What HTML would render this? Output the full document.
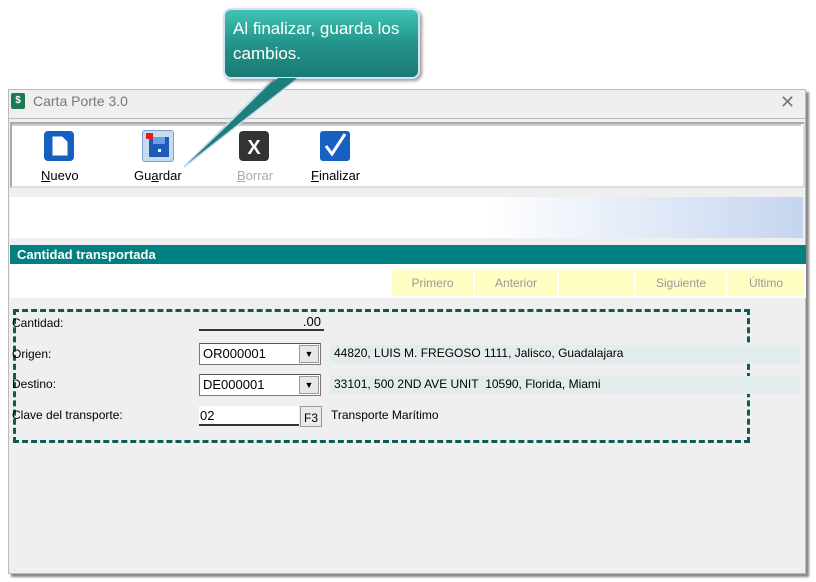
<!DOCTYPE html>
<html><head><meta charset="utf-8"><style>
*{margin:0;padding:0;box-sizing:border-box}
body{width:816px;height:582px;background:#fff;position:relative;font-family:"Liberation Sans",Arial,sans-serif;overflow:hidden}
.abs{position:absolute}
.win{left:8px;top:89px;width:798px;height:485px;background:#efefef;border:1px solid #bbb;box-shadow:3px 3px 2px #888}
.t{font-size:12px;color:#000}
.nav{top:270px;height:26px;background:#ffffc4;color:#999;font-size:12px;text-align:center;line-height:26px}
.lbl{font-size:12px;left:12px}
.combo{background:#fff;border:1px solid #7a7a7a;border-top-color:#555;height:22px;font-size:13px;line-height:20px;padding-left:3px}
.dd{position:absolute;right:1px;top:1px;width:20px;height:18px;background:#e8e8e8;border:1px solid #999;font-size:9px;text-align:center;line-height:17px}
.desc{background:#e3ecec;height:18px;font-size:12px;line-height:17px;padding-left:4px}
</style></head><body>
<div class="abs win"></div>
<div class="abs" style="left:11px;top:93px;width:14px;height:16px;background:#1e7a52;border-radius:2px;color:#fff;font-size:10px;font-weight:bold;text-align:center;line-height:16px">$</div>
<div class="abs" style="left:33px;top:93px;font-size:14px;color:#777">Carta Porte 3.0</div>
<div class="abs" style="left:780px;top:92px;font-size:18px;color:#777">✕</div>
<div class="abs" style="left:9px;top:118px;width:797px;height:1px;background:#bbb"></div>
<div class="abs" style="left:10px;top:122px;width:795px;height:66px;background:#fff;border:2px solid #aaa;border-right-color:#ddd;border-bottom-color:#ddd"></div>
<div class="abs" style="left:12px;top:124px;width:789px;height:2px;background:#ccc"></div>
<svg class="abs" style="left:43px;top:130px" width="32" height="32"><rect x="1" y="1" width="30" height="30" rx="4" fill="#1560c0"/><path d="M10 7h9l5 5v13H10z" fill="#fff" stroke="#fff"/></svg>
<div class="abs" style="left:142px;top:130px;width:32px;height:32px;background:#c8dcf0;border:1px solid #7aa0d0;border-radius:3px"></div>
<svg class="abs" style="left:146px;top:133px" width="26" height="28"><rect x="3" y="4" width="20" height="20" fill="#1c5bb8"/><rect x="7" y="4" width="12" height="7" fill="#6ea0e0"/><rect x="12" y="16" width="3" height="3" fill="#fff"/><rect x="0" y="0" width="7" height="6" fill="#e02020"/></svg>
<svg class="abs" style="left:238px;top:130px" width="32" height="32"><rect x="1" y="1" width="30" height="30" rx="4" fill="#333"/><text x="16" y="24" font-size="20" font-weight="bold" fill="#fff" text-anchor="middle" font-family="Liberation Sans">X</text></svg>
<svg class="abs" style="left:319px;top:130px" width="32" height="32"><rect x="1" y="1" width="30" height="30" rx="3" fill="#1560c0"/><path d="M7 16l6 8L26 4" stroke="#fff" stroke-width="3" fill="none"/></svg>
<div class="abs t" style="left:41px;top:168px;font-size:13px"><u>N</u>uevo</div>
<div class="abs t" style="left:134px;top:168px;font-size:13px">Gu<u>a</u>rdar</div>
<div class="abs t" style="left:237px;top:168px;font-size:13px;color:#aaa"><u>B</u>orrar</div>
<div class="abs t" style="left:311px;top:168px;font-size:13px"><u>F</u>inalizar</div>
<div class="abs" style="left:10px;top:197px;width:793px;height:41px;background:linear-gradient(90deg,#fff 0%,#fff 60%,#eef3fb 72%,#c5d5ef 100%)"></div>
<div class="abs" style="left:10px;top:245px;width:796px;height:19px;background:#008080;color:#fff;font-size:13px;font-weight:bold;line-height:19px;padding-left:7px">Cantidad transportada</div>
<div class="abs" style="left:10px;top:264px;width:796px;height:34px;background:#fff"></div>
<div class="abs nav" style="left:392px;width:81px">Primero</div>
<div class="abs nav" style="left:475px;width:82px">Anterior</div>
<div class="abs nav" style="left:559px;width:75px"></div>
<div class="abs nav" style="left:636px;width:90px">Siguiente</div>
<div class="abs nav" style="left:728px;width:76px">Último</div>
<div class="abs" style="left:13px;top:309px;width:737px;height:134px;border:3px dashed #0e5a55"></div>
<div class="abs lbl" style="top:316px">Cantidad:</div>
<div class="abs" style="left:199px;top:312px;width:125px;height:19px;border-bottom:2px solid #333;font-size:13px;text-align:right;line-height:19px;padding-right:3px">.00</div>
<div class="abs lbl" style="top:347px">Origen:</div>
<div class="abs combo" style="left:199px;top:343px;width:122px">OR000001<div class="dd">▼</div></div>
<div class="abs desc" style="left:330px;top:345px;width:470px">44820, LUIS M. FREGOSO 1111, Jalisco, Guadalajara</div>
<div class="abs lbl" style="top:377px">Destino:</div>
<div class="abs combo" style="left:199px;top:374px;width:122px">DE000001<div class="dd">▼</div></div>
<div class="abs desc" style="left:330px;top:376px;width:470px">33101, 500 2ND AVE UNIT&nbsp; 10590, Florida, Miami</div>
<div class="abs lbl" style="top:408px">Clave del transporte:</div>
<div class="abs" style="left:199px;top:406px;width:100px;height:20px;background:#fff;border-bottom:2px solid #333;font-size:13px;line-height:19px;padding-left:1px">02</div>
<div class="abs" style="left:300px;top:406px;width:22px;height:21px;background:#eaeaea;border:1px solid #999;font-size:12px;text-align:center;line-height:22px">F3</div>
<div class="abs t" style="left:331px;top:408px">Transporte Marítimo</div>
<svg class="abs" style="left:180px;top:70px" width="130" height="100"><path d="M96 6 L4 97 L120 6 Z" fill="#1f8a82" stroke="#c8d8f0" stroke-width="2"/></svg>
<div class="abs" style="left:223px;top:8px;width:197px;height:71px;background:linear-gradient(#40c4b4,#23948b 50%,#1a7a74);border:2px solid #d8e0f5;border-radius:8px;box-shadow:2px 2px 3px #999;color:#fff;font-size:17px;line-height:25px;padding:6px 0 0 8px">Al finalizar, guarda los cambios.</div>
<svg class="abs" style="left:180px;top:70px" width="130" height="100"><path d="M98 8 L7 94 L117 8 Z" fill="#1c7f79"/></svg>
</body></html>
